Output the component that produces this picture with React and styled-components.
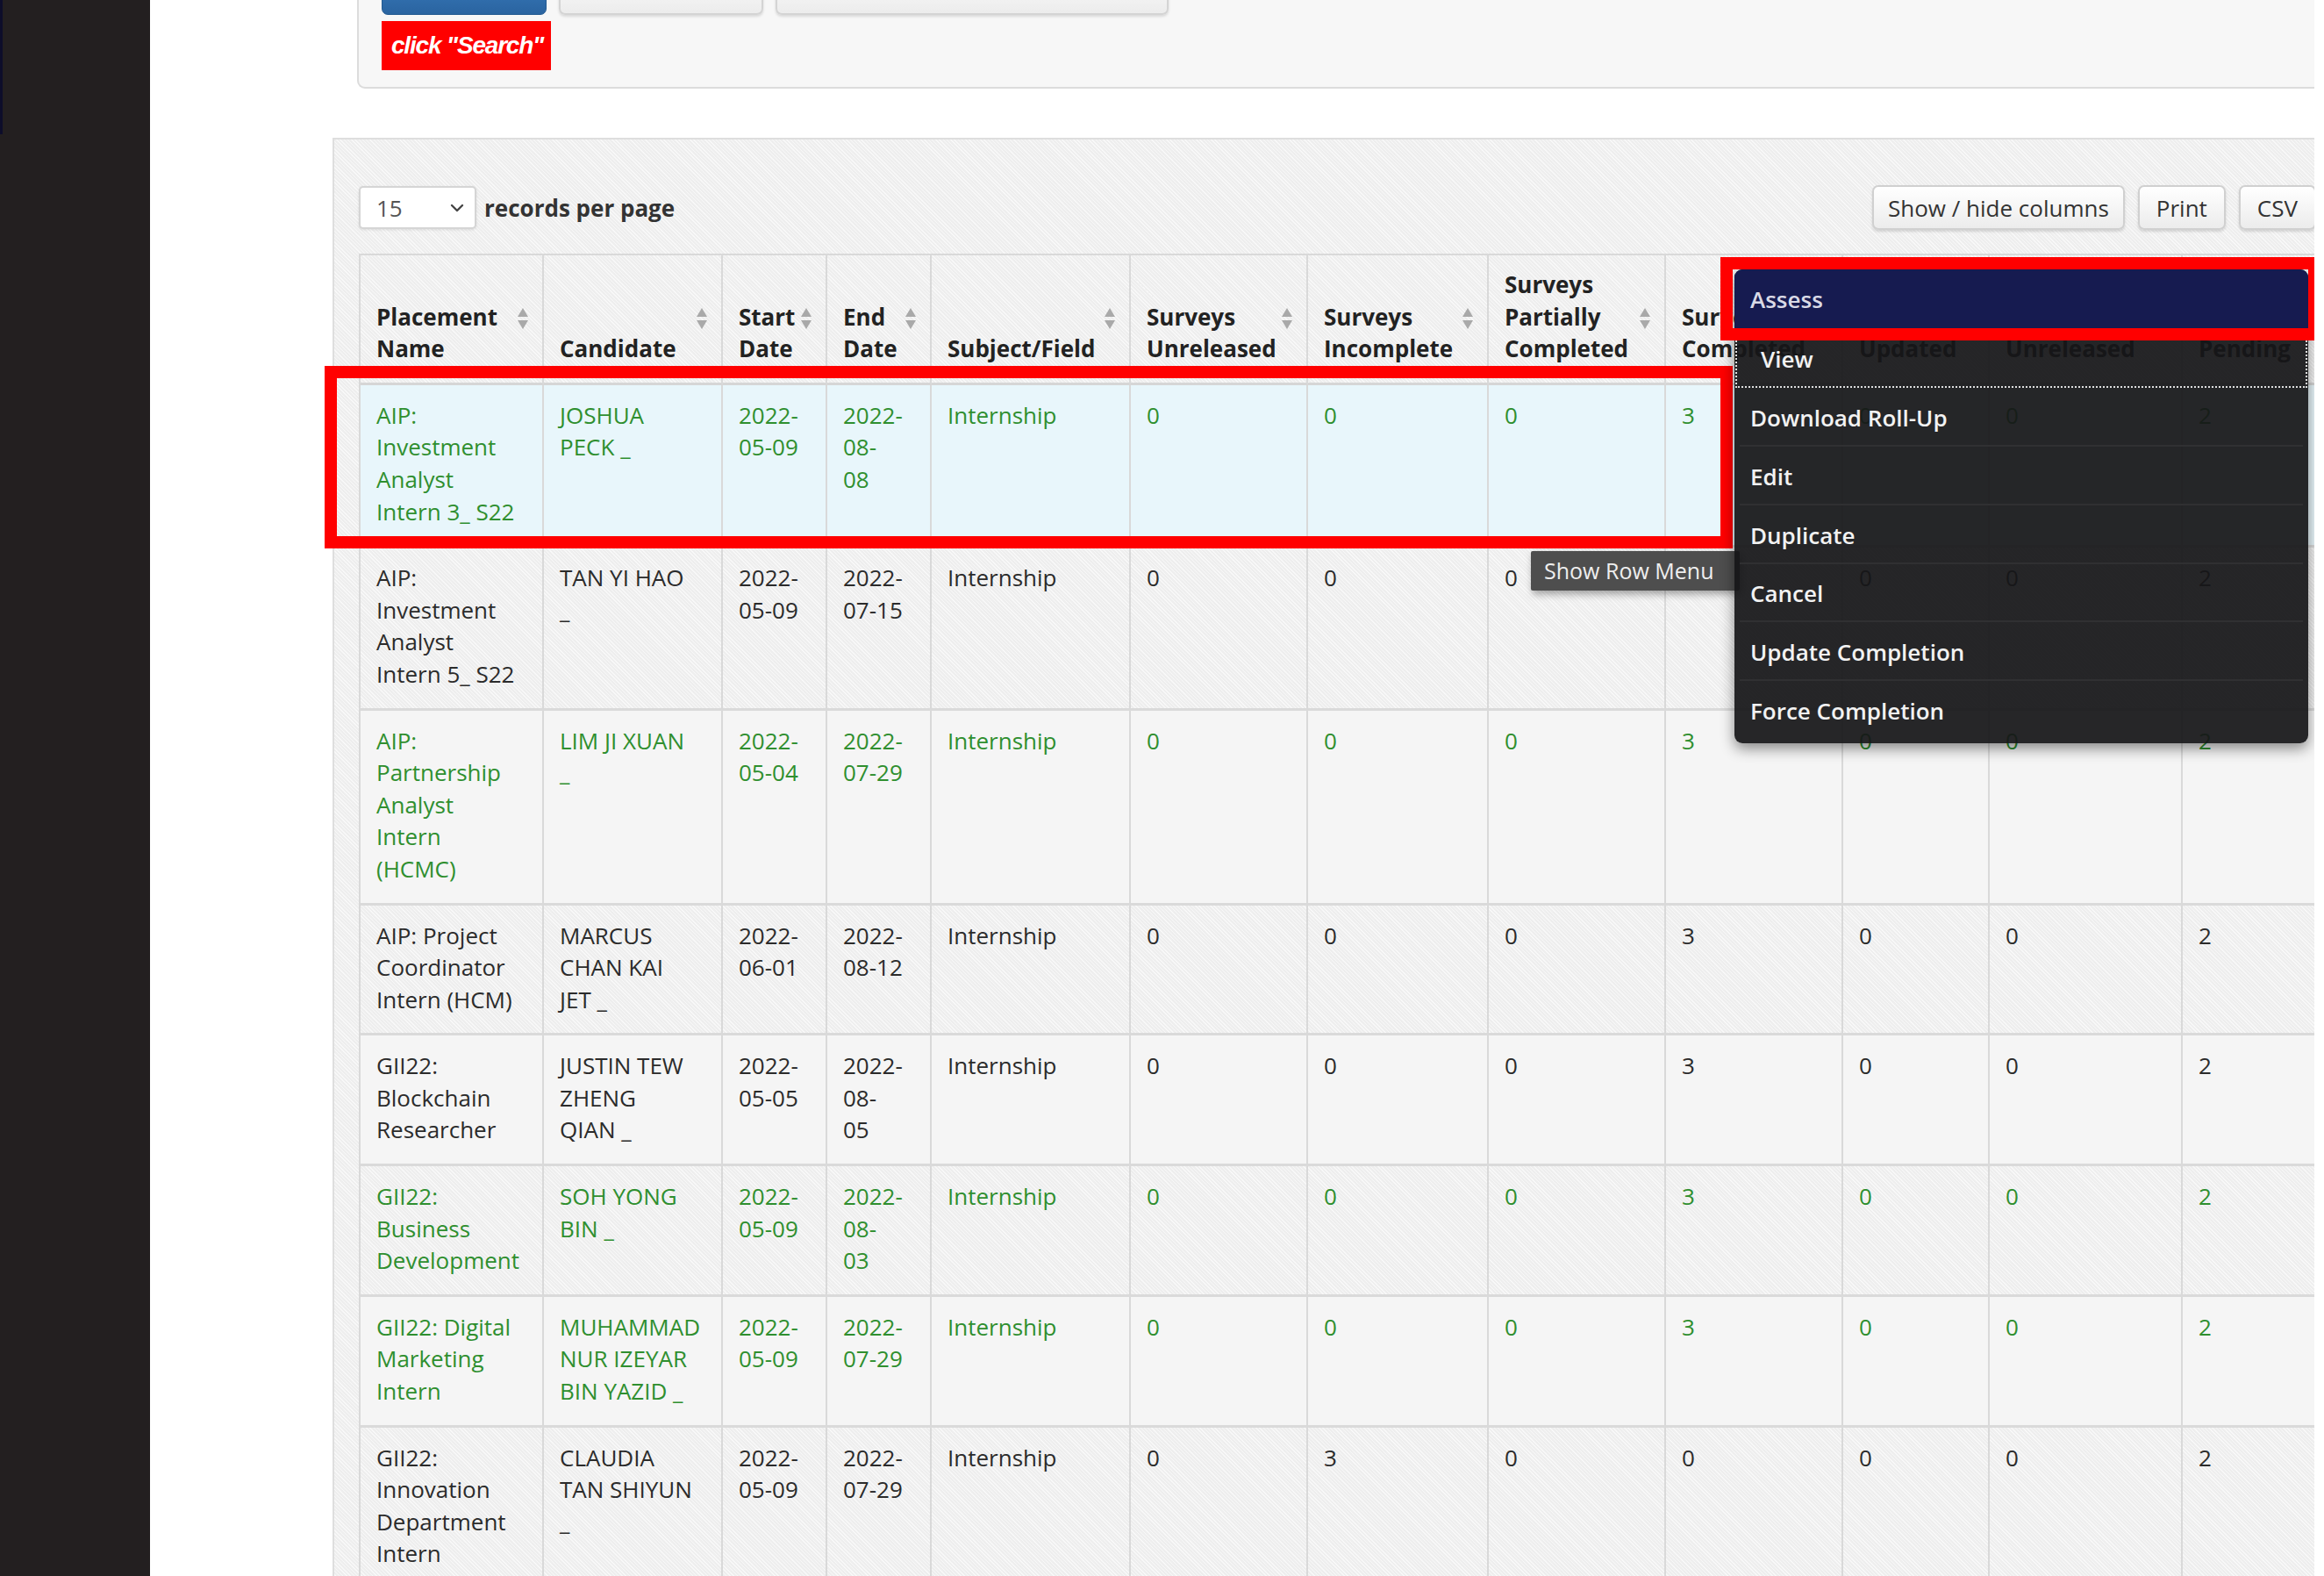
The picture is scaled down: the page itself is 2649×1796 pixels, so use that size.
import React from 'react';
import styled, { createGlobalStyle, css } from 'styled-components';
import { ChevronDown } from 'lucide-react';

const GlobalStyle = createGlobalStyle`
  html, body { margin: 0; padding: 0; background: #ffffff; }
  body {
    font-family: "Open Sans", "Liberation Sans", Arial, sans-serif;
    font-size: 26px;
    color: #333;
  }
  * { box-sizing: border-box; }
`;

const hatch = css`
  background-color: #eeeeee;
  background-image: repeating-linear-gradient(
    45deg,
    rgba(255, 255, 255, 0.6) 0 1px,
    transparent 1px 3px
  );
`;

const Page = styled.div`
  display: flex;
  width: 2649px;
  height: 1796px;
  overflow: hidden;
  background: #ffffff;
`;

const SideBar = styled.div`
  flex: 0 0 171px;
  height: 100%;
  background: linear-gradient(to bottom, #0d0d2a 0 153px, #231f20 153px);
  position: relative;
  &::after {
    content: '';
    position: absolute;
    left: 3px;
    right: 0;
    top: 0;
    bottom: 0;
    background: #231f20;
  }
`;

const Main = styled.div`
  flex: 0 0 2467px;
  height: 100%;
  overflow: hidden;
  display: flex;
  flex-direction: column;
  align-items: flex-start;
`;

const FilterPanel = styled.div`
  margin-left: 236px;
  width: 2300px;
  height: 101px;
  flex: 0 0 auto;
  background: #f7f7f7;
  border: 2px solid #dcdcdc;
  border-top: none;
  border-bottom-left-radius: 9px;
  padding: 0 0 0 26px;
  display: flex;
  flex-direction: column;
  align-items: flex-start;
`;

const FilterButtons = styled.div`
  display: flex;
  align-items: flex-end;
  gap: 14px;
  margin-top: -33px;
`;

const FilterButton = styled.div`
  width: ${(p) => p.$w}px;
  height: ${(p) => (p.$primary ? 50 : 48)}px;
  border-radius: 7px;
  ${(p) =>
    p.$primary
      ? css`
          background: linear-gradient(#3b7dc0, #2a64a0);
          border: 1px solid #235a91;
        `
      : css`
          background: linear-gradient(#fbfbfb, #ececec);
          border: 2px solid #d4d4d4;
          box-shadow: 0 2px 3px rgba(0, 0, 0, 0.12);
        `}
`;

const SearchHint = styled.div`
  margin-top: 7px;
  height: 56px;
  padding: 0 9px 0 11px;
  background: #ff0000;
  color: #ffffff;
  font-family: "Liberation Sans Narrow", "Liberation Sans", Arial, sans-serif;
  font-style: italic;
  font-weight: 700;
  font-size: 28px;
  letter-spacing: -1.2px;
  display: flex;
  align-items: center;
  white-space: nowrap;
`;

const TablePanel = styled.div`
  margin-top: 56px;
  margin-left: 208px;
  width: 2289px;
  flex: 1 0 auto;
  ${hatch};
  border-top: 2px solid #dedede;
  border-left: 2px solid #dedede;
  padding: 52px 28px 0 28px;
  display: flex;
  flex-direction: column;
`;

const Toolbar = styled.div`
  display: flex;
  align-items: center;
  height: 51px;
  gap: 15px;
`;

const PerPage = styled.div`
  width: 134px;
  height: 49px;
  background: #ffffff;
  border: 2px solid #d5d5d5;
  border-radius: 5px;
  box-shadow: 0 1px 3px rgba(0, 0, 0, 0.1);
  padding: 0 8px 0 18px;
  display: flex;
  align-items: center;
  justify-content: space-between;
  color: #555;
  font-size: 26px;
`;

const PerPageLabel = styled.span`
  margin-left: -6px;
  font-weight: 700;
  color: #333;
  font-size: 26px;
`;

const Spacer = styled.div`
  flex: 1;
`;

const ToolButton = styled.div`
  height: 51px;
  padding: 0 ${(p) => p.$pad}px;
  display: flex;
  align-items: center;
  background: linear-gradient(#ffffff, #ececec);
  border: 2px solid #d0d0d0;
  border-radius: 7px;
  box-shadow: 0 2px 3px rgba(0, 0, 0, 0.13);
  color: #333;
  font-size: 26px;
  white-space: nowrap;
`;

const TableWrap = styled.div`
  position: relative;
  margin-top: 27px;
  width: 2231px;
`;

const Table = styled.table`
  width: 2231px;
  table-layout: fixed;
  border-collapse: separate;
  border-spacing: 0;
  border-top: 2px solid #d9d9d9;
  border-left: 2px solid #d9d9d9;
`;

const Col = styled.col`
  width: ${(p) => p.$w}px;
`;

const HeadCell = styled.th`
  position: relative;
  vertical-align: bottom;
  text-align: left;
  padding: 15px 17px 20px 18px;
  border-right: 2px solid #d9d9d9;
  border-bottom: 3px solid #d6d6d6;
  font-weight: 700;
  font-size: 26px;
  line-height: 36.6px;
  color: #222;
`;

const SortIcon = styled.svg`
  position: absolute;
  right: 16px;
  top: 50%;
  transform: translateY(-50%);
  width: 12px;
  height: 24px;
`;

const Row = styled.tr`
  ${(p) =>
    p.$bg === 'hover'
      ? css`
          background: #e8f6fb;
        `
      : p.$bg === 'plain'
      ? css`
          background: #f5f5f5;
        `
      : css`
          background: transparent;
        `}
`;

const Cell = styled.td`
  vertical-align: top;
  padding: 16px 17px 20px 18px;
  border-right: 2px solid #d9d9d9;
  border-bottom: 3px solid #dadada;
  font-size: 26px;
  line-height: 36.6px;
  color: ${(p) => (p.$green ? '#2f8f2f' : '#2b2b2b')};
`;

const Line = styled.span`
  display: block;
  white-space: nowrap;
`;

const RowMark = styled.div`
  position: absolute;
  left: -39px;
  top: 128px;
  width: 1605px;
  height: 208px;
  border: 14px solid #ff0000;
  z-index: 2;
  pointer-events: none;
`;

const Tooltip = styled.div`
  position: absolute;
  left: 1336px;
  top: 339px;
  height: 45px;
  padding: 0 30px 0 15px;
  background: #4e4e4e;
  color: #eeeeee;
  font-size: 25px;
  line-height: 45px;
  white-space: nowrap;
  border-radius: 2px;
  box-shadow: 2px 4px 8px rgba(0, 0, 0, 0.35);
  z-index: 3;
`;

const Menu = styled.div`
  position: absolute;
  left: 1568px;
  top: 18px;
  width: 654px;
  padding-bottom: 4px;
  background: rgba(22, 22, 24, 0.93);
  border-radius: 9px;
  box-shadow: 0 6px 16px rgba(0, 0, 0, 0.45);
  overflow: hidden;
  z-index: 4;
`;

const MenuItem = styled.div`
  position: relative;
  height: ${(p) => p.$h}px;
  display: flex;
  align-items: center;
  padding-left: ${(p) => (p.$focus ? 30 : 18)}px;
  font-size: 26px;
  font-weight: 600;
  white-space: nowrap;
  color: ${(p) => (p.$active ? '#d9dae6' : '#f2f2f2')};
  background: ${(p) => (p.$active ? '#161b50' : 'transparent')};
  ${(p) =>
    p.$focus &&
    css`
      outline: 2px dotted rgba(255, 255, 255, 0.85);
      outline-offset: -3px;
    `}
  ${(p) =>
    p.$sep &&
    css`
      &::after {
        content: '';
        position: absolute;
        left: 6px;
        right: 6px;
        bottom: 0;
        height: 2px;
        background: #303032;
      }
    `}
`;

const AssessMark = styled.div`
  position: absolute;
  left: 1552px;
  top: 4px;
  width: 684px;
  height: 95px;
  border: 14px solid #ff0000;
  z-index: 5;
  pointer-events: none;
`;

const columns = [
  { w: 209, lines: ['Placement', 'Name'] },
  { w: 204, lines: ['Candidate'] },
  { w: 119, lines: ['Start', 'Date'] },
  { w: 119, lines: ['End', 'Date'] },
  { w: 227, lines: ['Subject/Field'] },
  { w: 202, lines: ['Surveys', 'Unreleased'] },
  { w: 206, lines: ['Surveys', 'Incomplete'] },
  { w: 202, lines: ['Surveys', 'Partially', 'Completed'] },
  { w: 202, lines: ['Surveys', 'Completed'] },
  { w: 167, lines: ['Surveys', 'Updated'] },
  { w: 220, lines: ['Surveys', 'Unreleased'] },
  { w: 154, lines: ['Tasks', 'Pending'] },
];

const rows = [
  {
    green: true,
    bg: 'hover',
    cells: [
      ['AIP:', 'Investment', 'Analyst', 'Intern 3_ S22'],
      ['JOSHUA', 'PECK _'],
      ['2022-', '05-09'],
      ['2022-', '08-', '08'],
      ['Internship'],
      ['0'], ['0'], ['0'], ['3'], ['0'], ['0'], ['2'],
    ],
  },
  {
    green: false,
    bg: 'hatch',
    cells: [
      ['AIP:', 'Investment', 'Analyst', 'Intern 5_ S22'],
      ['TAN YI HAO', '_'],
      ['2022-', '05-09'],
      ['2022-', '07-15'],
      ['Internship'],
      ['0'], ['0'], ['0'], ['3'], ['0'], ['0'], ['2'],
    ],
  },
  {
    green: true,
    bg: 'plain',
    cells: [
      ['AIP:', 'Partnership', 'Analyst', 'Intern', '(HCMC)'],
      ['LIM JI XUAN', '_'],
      ['2022-', '05-04'],
      ['2022-', '07-29'],
      ['Internship'],
      ['0'], ['0'], ['0'], ['3'], ['0'], ['0'], ['2'],
    ],
  },
  {
    green: false,
    bg: 'hatch',
    cells: [
      ['AIP: Project', 'Coordinator', 'Intern (HCM)'],
      ['MARCUS', 'CHAN KAI', 'JET _'],
      ['2022-', '06-01'],
      ['2022-', '08-12'],
      ['Internship'],
      ['0'], ['0'], ['0'], ['3'], ['0'], ['0'], ['2'],
    ],
  },
  {
    green: false,
    bg: 'plain',
    cells: [
      ['GII22:', 'Blockchain', 'Researcher'],
      ['JUSTIN TEW', 'ZHENG', 'QIAN _'],
      ['2022-', '05-05'],
      ['2022-', '08-', '05'],
      ['Internship'],
      ['0'], ['0'], ['0'], ['3'], ['0'], ['0'], ['2'],
    ],
  },
  {
    green: true,
    bg: 'hatch',
    cells: [
      ['GII22:', 'Business', 'Development'],
      ['SOH YONG', 'BIN _'],
      ['2022-', '05-09'],
      ['2022-', '08-', '03'],
      ['Internship'],
      ['0'], ['0'], ['0'], ['3'], ['0'], ['0'], ['2'],
    ],
  },
  {
    green: true,
    bg: 'plain',
    cells: [
      ['GII22: Digital', 'Marketing', 'Intern'],
      ['MUHAMMAD', 'NUR IZEYAR', 'BIN YAZID _'],
      ['2022-', '05-09'],
      ['2022-', '07-29'],
      ['Internship'],
      ['0'], ['0'], ['0'], ['3'], ['0'], ['0'], ['2'],
    ],
  },
  {
    green: false,
    bg: 'hatch',
    cells: [
      ['GII22:', 'Innovation', 'Department', 'Intern'],
      ['CLAUDIA', 'TAN SHIYUN', '_'],
      ['2022-', '05-09'],
      ['2022-', '07-29'],
      ['Internship'],
      ['0'], ['3'], ['0'], ['0'], ['0'], ['0'], ['2'],
    ],
  },
];

const menuItems = [
  { label: 'Assess', h: 67, active: true },
  { label: 'View', h: 69, focus: true },
  { label: 'Download Roll-Up', h: 66, sep: true },
  { label: 'Edit', h: 67, sep: true },
  { label: 'Duplicate', h: 67, sep: true },
  { label: 'Cancel', h: 66, sep: true },
  { label: 'Update Completion', h: 67, sep: true },
  { label: 'Force Completion', h: 67 },
];

function Sort() {
  return (
    <SortIcon viewBox="0 0 12 24">
      <polygon points="6,0 12,10 0,10" fill="#a9a9a9" />
      <polygon points="0,14 12,14 6,24" fill="#a9a9a9" />
    </SortIcon>
  );
}

export default function App() {
  return (
    <>
      <GlobalStyle />
      <Page>
        <SideBar />
        <Main>
          <FilterPanel>
            <FilterButtons>
              <FilterButton $primary $w={188} />
              <FilterButton $w={233} />
              <FilterButton $w={448} />
            </FilterButtons>
            <SearchHint>click "Search"</SearchHint>
          </FilterPanel>

          <TablePanel>
            <Toolbar>
              <PerPage>
                <span>15</span>
                <ChevronDown size={24} strokeWidth={2.4} color="#444" />
              </PerPage>
              <PerPageLabel>records per page</PerPageLabel>
              <Spacer />
              <ToolButton $pad={16}>Show / hide columns</ToolButton>
              <ToolButton $pad={19}>Print</ToolButton>
              <ToolButton $pad={19}>CSV</ToolButton>
            </Toolbar>

            <TableWrap>
              <Table>
                <colgroup>
                  {columns.map((c, i) => (
                    <Col key={i} $w={c.w} />
                  ))}
                </colgroup>
                <thead>
                  <tr>
                    {columns.map((c, i) => (
                      <HeadCell key={i}>
                        {c.lines.map((l, j) => (
                          <Line key={j}>{l}</Line>
                        ))}
                        <Sort />
                      </HeadCell>
                    ))}
                  </tr>
                </thead>
                <tbody>
                  {rows.map((r, i) => (
                    <Row key={i} $bg={r.bg}>
                      {r.cells.map((lines, j) => (
                        <Cell key={j} $green={r.green}>
                          {lines.map((l, k) => (
                            <Line key={k}>{l}</Line>
                          ))}
                        </Cell>
                      ))}
                    </Row>
                  ))}
                </tbody>
              </Table>

              <RowMark />
              <Tooltip>Show Row Menu</Tooltip>
              <Menu>
                {menuItems.map((m) => (
                  <MenuItem
                    key={m.label}
                    $h={m.h}
                    $active={m.active}
                    $focus={m.focus}
                    $sep={m.sep}
                  >
                    {m.label}
                  </MenuItem>
                ))}
              </Menu>
              <AssessMark />
            </TableWrap>
          </TablePanel>
        </Main>
      </Page>
    </>
  );
}
